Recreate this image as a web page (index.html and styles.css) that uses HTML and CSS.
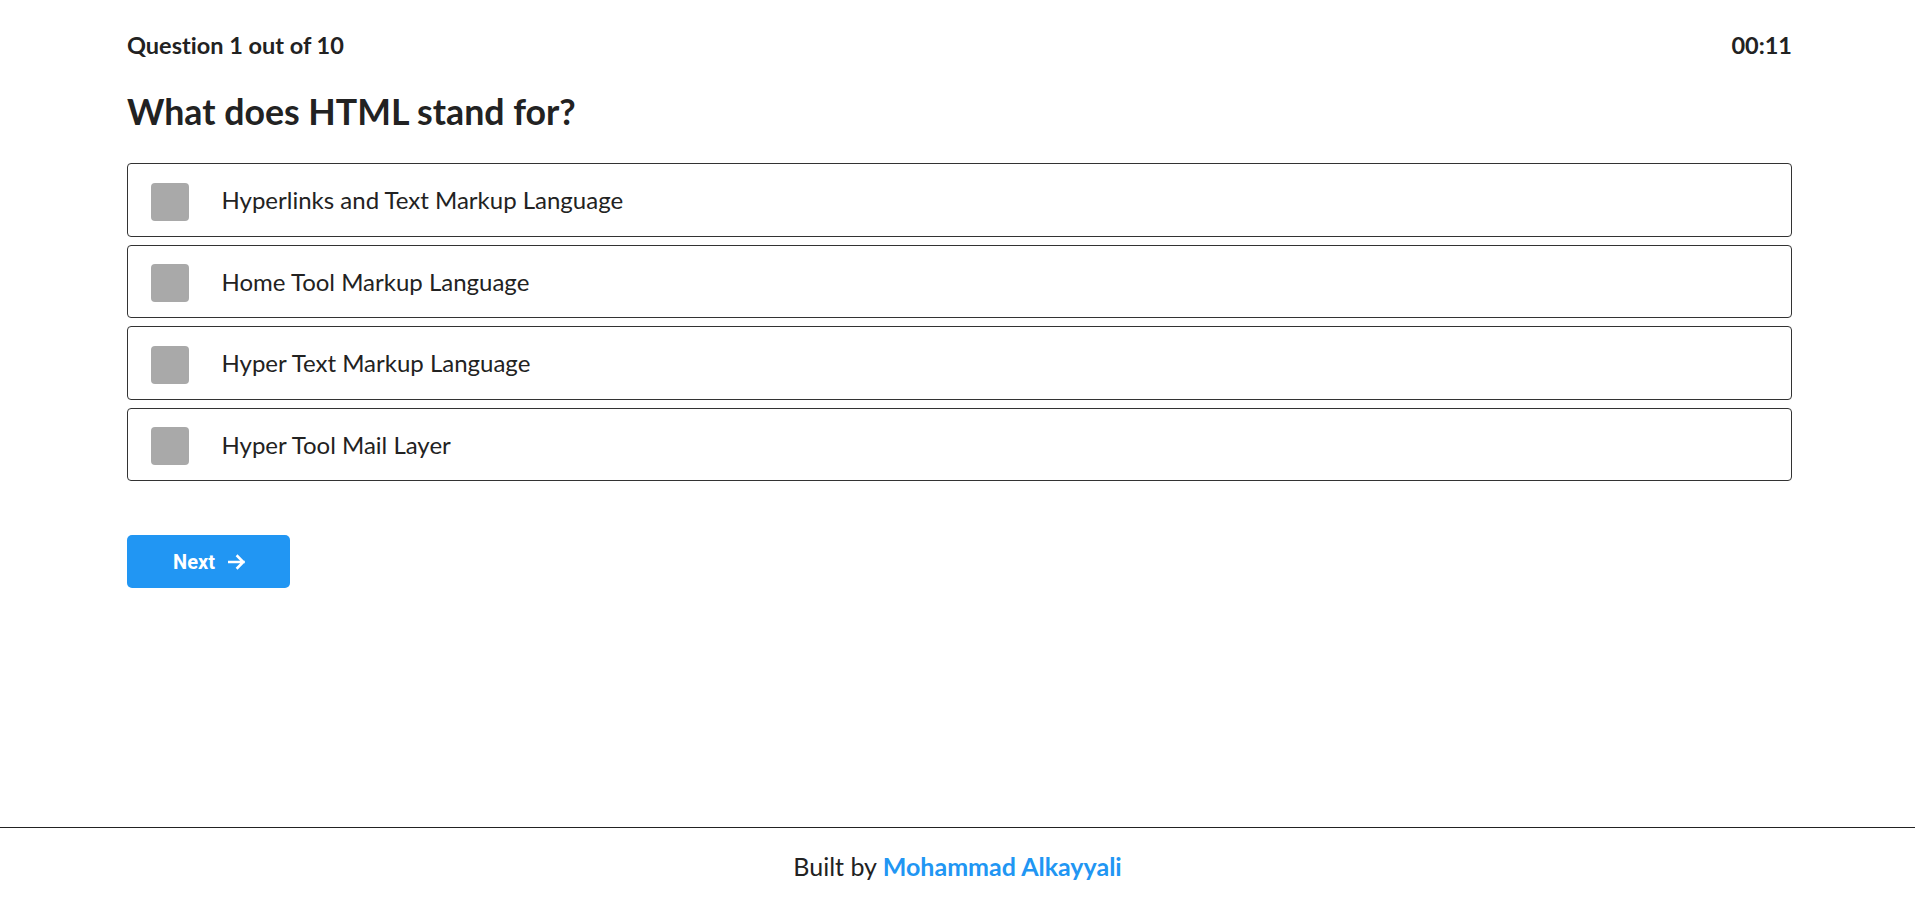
FILE: index.html
```html
<!DOCTYPE html>
<html lang="en">
<head>
<meta charset="utf-8">
<title>Quiz</title>
<link rel="stylesheet" href="styles.css">
</head>
<body>
<main class="quiz">
  <div class="quiz-header">
    <span class="counter">Question 1 out of 10</span>
    <span class="timer">00:11</span>
  </div>
  <h1 class="question">What does HTML stand for?</h1>
  <ul class="options">
    <li class="option"><span class="check"></span><span class="label">Hyperlinks and Text Markup Language</span></li>
    <li class="option"><span class="check"></span><span class="label">Home Tool Markup Language</span></li>
    <li class="option"><span class="check"></span><span class="label">Hyper Text Markup Language</span></li>
    <li class="option"><span class="check"></span><span class="label">Hyper Tool Mail Layer</span></li>
  </ul>
  <button class="next-btn" type="button">Next
    <svg class="arrow" width="18" height="16" viewBox="0 0 18 16" aria-hidden="true"><path d="M1 8h14.5M9.5 2.2L15.3 8l-5.8 5.8" fill="none" stroke="#fff" stroke-width="2.6" stroke-linecap="square"/></svg>
  </button>
</main>
<footer class="footer">
  <span>Built by <a class="author" href="#">Mohammad Alkayyali</a></span>
</footer>
</body>
</html>
```

FILE: styles.css
```css
* { box-sizing: border-box; }
html, body { height: 100%; }
body {
  margin: 0;
  font-family: "Lato", "Noto Sans", sans-serif;
  font-variant-ligatures: no-common-ligatures;
  color: #222;
  background: #fff;
  display: flex;
  flex-direction: column;
  min-height: 100vh;
}
.quiz {
  flex: 1;
  width: 1665px;
  margin: 0 auto;
  padding-top: 33px;
  position: relative;
  left: 2px;
}
.quiz-header {
  display: flex;
  justify-content: space-between;
  align-items: center;
  font-size: 23.5px;
  font-weight: 700;
  line-height: 24px;
}
.question {
  margin: 0;
  margin-top: 33px;
  font-size: 35.7px;
  font-weight: 700;
  line-height: 44px;
}
.options {
  list-style: none;
  margin: 29px 0 0;
  padding: 0;
  display: flex;
  flex-direction: column;
  gap: 8px;
}
.option {
  display: flex;
  align-items: center;
  height: 73.5px;
  border: 1px solid #333;
  border-radius: 4px;
  padding: 0 0 0 23px;
}
.check {
  width: 38px;
  height: 38px;
  margin-top: 4px;
  background: #a9a9a9;
  border-radius: 4px;
  flex: none;
}
.label {
  margin-left: 32.5px;
  font-size: 24px;
}
.next-btn {
  margin-top: 54px;
  width: 163px;
  height: 53px;
  border: none;
  border-radius: 5px;
  background: #2196f3;
  color: #fff;
  font-family: "Roboto", "Liberation Sans", sans-serif;
  font-weight: 700;
  font-size: 20px;
  display: flex;
  align-items: center;
  justify-content: center;
  gap: 13px;
  padding: 0 0 0 2px;
}
.arrow { display: block; }
.footer {
  height: 70px;
  border-top: 1px solid #222;
  display: flex;
  align-items: center;
  justify-content: center;
  font-size: 25px;
  padding-top: 7px;
}
.author {
  color: #2196f3;
  text-decoration: none;
  font-weight: 700;
}
```
